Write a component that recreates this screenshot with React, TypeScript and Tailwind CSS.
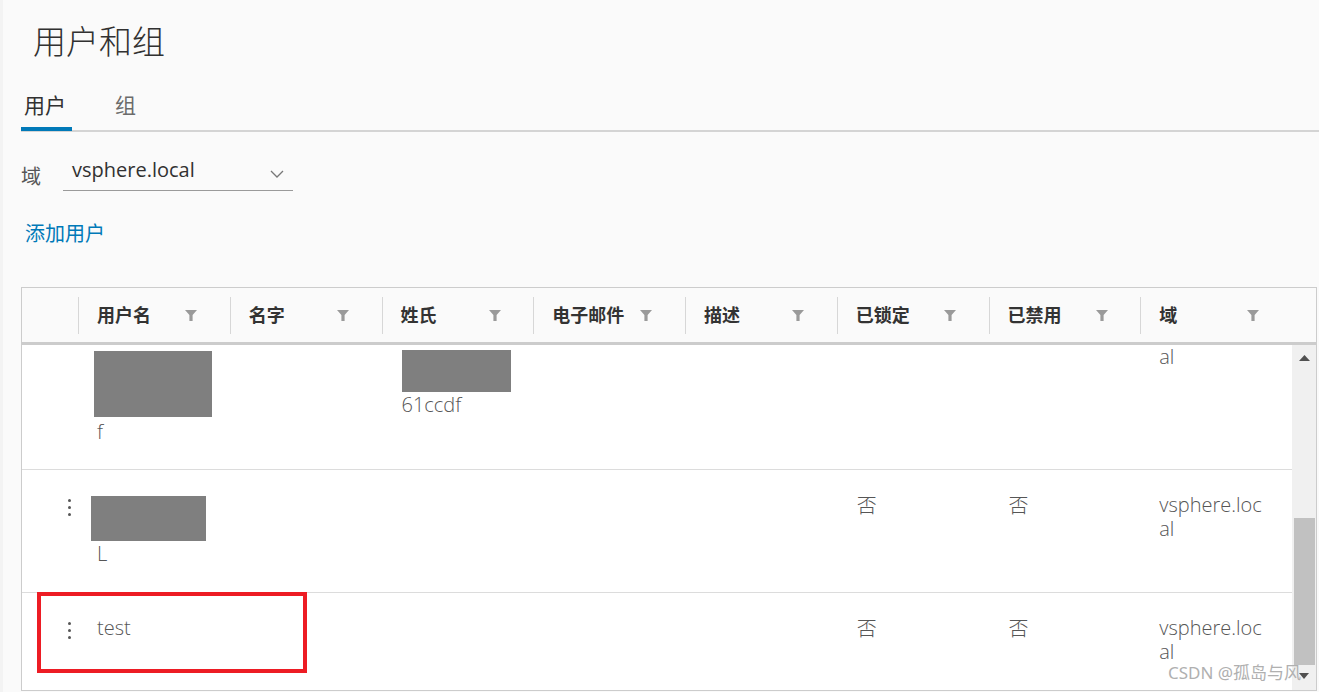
import React from "react";

const FilterIcon = () => (
  <svg width="12" height="11" viewBox="0 0 12 11" className="shrink-0">
    <path d="M0 0H12L7.6 5V11H4.4V5Z" fill="#9a9a9a" />
  </svg>
);

const Chevron = () => (
  <svg width="14" height="8" viewBox="0 0 14 8" className="shrink-0">
    <path d="M1 1L7 7L13 1" fill="none" stroke="#777777" strokeWidth="1.3" />
  </svg>
);

const Kebab = () => (
  <div className="flex flex-col items-center gap-[4px] w-[3px]">
    <span className="block w-[3px] h-[3px] rounded-full bg-[#565656]" />
    <span className="block w-[3px] h-[3px] rounded-full bg-[#565656]" />
    <span className="block w-[3px] h-[3px] rounded-full bg-[#565656]" />
  </div>
);

const headers = ["用户名", "名字", "姓氏", "电子邮件", "描述", "已锁定", "已禁用", "域"];

const Domain = () => (
  <div className="w-[112px] break-all">vsphere.local</div>
);

export default function App() {
  return (
    <div className="relative w-[1319px] h-[692px] overflow-hidden bg-[#fafafa] border-l-[3px] border-[#f3f3f3] font-['Open_Sans','Noto_Sans_CJK_SC',sans-serif] text-[#565656]">
      <div className="pl-[18px]">
        <h1 className="pt-[22px] pl-[12px] text-[33px] leading-[40px] font-light text-[#313131]">用户和组</h1>

        <div className="mt-[29px] flex border-b-[2px] border-[#d4d4d4]">
          <div className="pl-[3px] pr-[6px] pb-[8px] text-[21px] leading-[28px] text-[#313131] border-b-[4px] border-[#0079b8] -mb-[1px]">用户</div>
          <div className="ml-[40px] pl-[3px] text-[21px] leading-[28px] text-[#6b6b6b]">组</div>
        </div>

        <div className="mt-[22px] flex items-start">
          <div className="pt-[11px] text-[20px] leading-[24px] text-[#565656]">域</div>
          <div className="ml-[22px] w-[230px] h-[37px] flex justify-between pt-[4px] pl-[9px] pr-[9px] border-b border-[#9a9a9a]">
            <span className="text-[20px] leading-[24px] text-[#313131]">vsphere.local</span>
            <div className="mt-[12px]"><Chevron /></div>
          </div>
        </div>

        <div className="mt-[31px] pl-[4px] text-[20px] leading-[24px] text-[#0079b8]">添加用户</div>

        <div className="mt-[41px] w-[1296px] h-[404px] border border-[#cccccc] flex flex-col">
          <div className="grid grid-cols-[56px_repeat(7,151.75px)_1fr] h-[54px] shrink-0 bg-[#fafafa] border-b-[3px] border-[#cccccc] box-content">
            <div />
            {headers.map((h) => (
              <div key={h} className="flex items-center">
                <div className="w-px h-[37px] bg-[#d7d7d7]" />
                <span className="ml-[18px] w-[88px] text-[18px] leading-[24px] font-bold text-[#333333]">{h}</span>
                <FilterIcon />
              </div>
            ))}
          </div>

          <div className="flex flex-1 min-h-0 bg-white">
            <div className="w-[1270px] overflow-hidden text-[20px] leading-[24px] font-light">
              {/* row 1 (scrolled) */}
              <div className="grid grid-cols-[56px_repeat(8,151.75px)] h-[125px] border-b border-[#dcdcdc] overflow-hidden">
                <div />
                <div className="pl-[19px]">
                  <div className="mt-[6px] -ml-[3px] w-[118px] h-[66px] bg-[#7f7f7f]" />
                  <div className="mt-[3px]">f</div>
                </div>
                <div />
                <div className="pl-[19px]">
                  <div className="mt-[5px] ml-[1px] w-[109px] h-[42px] bg-[#7f7f7f]" />
                  <div className="ml-[1px] mt-[1px]">61ccdf</div>
                </div>
                <div />
                <div />
                <div />
                <div />
                <div className="pl-[19px]">al</div>
              </div>

              {/* row 2 */}
              <div className="grid grid-cols-[56px_repeat(8,151.75px)] h-[123px] border-b border-[#dcdcdc]">
                <div className="pl-[46px] pt-[29px]"><Kebab /></div>
                <div className="pl-[19px]">
                  <div className="mt-[26px] -ml-[6px] w-[115px] h-[45px] bg-[#7f7f7f]" />
                  <div className="mt-[1px]">L</div>
                </div>
                <div />
                <div />
                <div />
                <div />
                <div className="pl-[20px] pt-[24px]">否</div>
                <div className="pl-[20px] pt-[24px]">否</div>
                <div className="pl-[19px] pt-[23px]"><Domain /></div>
              </div>

              {/* row 3 */}
              <div className="grid grid-cols-[56px_repeat(8,151.75px)] h-[123px]">
                <div className="pl-[46px] pt-[29px]"><Kebab /></div>
                <div className="pl-[19px] pt-[23px]">test</div>
                <div />
                <div />
                <div />
                <div />
                <div className="pl-[20px] pt-[24px]">否</div>
                <div className="pl-[20px] pt-[24px]">否</div>
                <div className="pl-[19px] pt-[23px]"><Domain /></div>
              </div>
            </div>

            <div className="w-[24px] bg-[#f0f0f0] flex flex-col items-center">
              <svg width="11" height="6" viewBox="0 0 11 6" className="mt-[10px]">
                <path d="M0 6L5.5 0L11 6Z" fill="#505050" />
              </svg>
              <div className="mt-[157px] ml-[1px] w-[21px] h-[147px] bg-[#c1c1c1]" />
              <svg width="10" height="6" viewBox="0 0 10 6" className="mt-[8px]">
                <path d="M0 0H10L5 6Z" fill="#505050" />
              </svg>
            </div>
          </div>
        </div>
      </div>

      <div className="absolute left-[34px] top-[592px] w-[270px] h-[81px] border-[4px] border-[#ed1c24]" />

      <div className="absolute left-[1165px] top-[662px] text-[17px] leading-[22px] text-[#b0b0b0] font-['Noto_Sans','Noto_Sans_CJK_SC',sans-serif] whitespace-nowrap">
        CSDN @孤岛与风
      </div>
    </div>
  );
}
